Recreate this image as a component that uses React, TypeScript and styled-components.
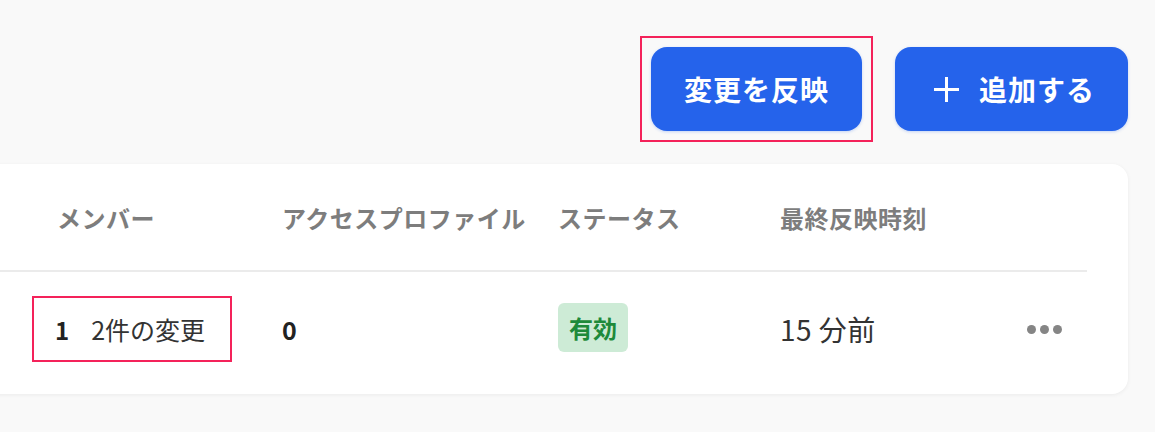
import styled, { createGlobalStyle } from "styled-components";

const GlobalStyle = createGlobalStyle`
  html, body {
    margin: 0;
    padding: 0;
    background: #f9f9f9;
    font-family: "Noto Sans CJK JP", "Noto Sans", sans-serif;
    overflow: hidden;
  }
`;

const Page = styled.div`
  width: 1155px;
  height: 432px;
  padding: 36px 27px 0 0;
  box-sizing: border-box;
  display: flex;
  flex-direction: column;
  gap: 22px;
`;

const Toolbar = styled.div`
  display: flex;
  justify-content: flex-end;
  align-items: center;
  gap: 22px;
`;

// red annotation frame around the highlighted button
const Highlight = styled.div`
  border: 2px solid #f4225a;
  padding: 9px;
`;

const Button = styled.button<{ $padLeft?: number }>`
  height: 84px;
  padding: 0 33px 0 ${p => p.$padLeft ?? 33}px;
  display: flex;
  align-items: center;
  gap: 20px;
  border: none;
  border-radius: 16px;
  background: #2563eb;
  color: #fff;
  font-family: inherit;
  font-size: 28px;
  font-weight: 700;
  letter-spacing: 1px;
  box-shadow: 0 1px 3px rgba(37, 99, 235, 0.25);
  cursor: pointer;
`;

const Card = styled.div`
  margin-left: -24px;
  height: 230px;
  background: #fff;
  border-radius: 16px;
  box-shadow: 0 1px 4px rgba(0, 0, 0, 0.06);
  padding-right: 41px;
`;

const Row = styled.div<{ $height: number; $divider?: boolean }>`
  display: grid;
  grid-template-columns: 250px 276px 222px 1fr auto;
  align-items: center;
  height: ${p => p.$height}px;
  padding: 0 25px 0 56px;
  border-bottom: ${p => (p.$divider ? "2px solid #ebebeb" : "none")};
`;

const HeadCell = styled.div<{ $indent?: number }>`
  padding-left: ${p => p.$indent ?? 0}px;
  font-size: 24px;
  font-weight: 700;
  color: #7d7d7d;
  white-space: nowrap;
  letter-spacing: 0.5px;
`;

const MemberBox = styled.div`
  width: 200px;
  height: 66px;
  box-sizing: border-box;
  border: 2px solid #f4225a;
  padding-left: 21px;
  display: flex;
  align-items: center;
  gap: 22px;
  font-size: 25px;
  color: #333;
  > b {
    font-size: 24px;
    color: #222;
  }
`;

const Count = styled.div`
  font-size: 25px;
  font-weight: 700;
  color: #222;
`;

const Badge = styled.span`
  justify-self: start;
  display: inline-flex;
  align-items: center;
  height: 49px;
  margin-bottom: 4px;
  padding: 0 11px;
  border-radius: 6px;
  background: #cdebd6;
  color: #1e8a3a;
  font-size: 24px;
  font-weight: 700;
`;

const Time = styled.div`
  font-size: 28px;
  letter-spacing: 0.5px;
  color: #333;
`;

const More = styled.div`
  display: flex;
  gap: 4px;
  > span {
    width: 9px;
    height: 9px;
    border-radius: 50%;
    background: #858585;
  }
`;

const PlusIcon = () => (
  <svg width="25" height="25" viewBox="0 0 25 25" fill="none">
    <path d="M12.5 0v25M0 12.5h25" stroke="#fff" strokeWidth="3" />
  </svg>
);

export default function App() {
  return (
    <>
      <GlobalStyle />
      <Page>
        <Toolbar>
          <Highlight>
            <Button>変更を反映</Button>
          </Highlight>
          <Button $padLeft={39}>
            <PlusIcon />
            追加する
          </Button>
        </Toolbar>
        <Card>
          <Row $height={106} $divider>
            <HeadCell $indent={25}>メンバー</HeadCell>
            <HeadCell>アクセスプロファイル</HeadCell>
            <HeadCell>ステータス</HeadCell>
            <HeadCell>最終反映時刻</HeadCell>
            <span />
          </Row>
          <Row $height={114}>
            <MemberBox>
              <b>1</b>
              <span>2件の変更</span>
            </MemberBox>
            <Count>0</Count>
            <Badge>有効</Badge>
            <Time>15 分前</Time>
            <More>
              <span />
              <span />
              <span />
            </More>
          </Row>
        </Card>
      </Page>
    </>
  );
}
